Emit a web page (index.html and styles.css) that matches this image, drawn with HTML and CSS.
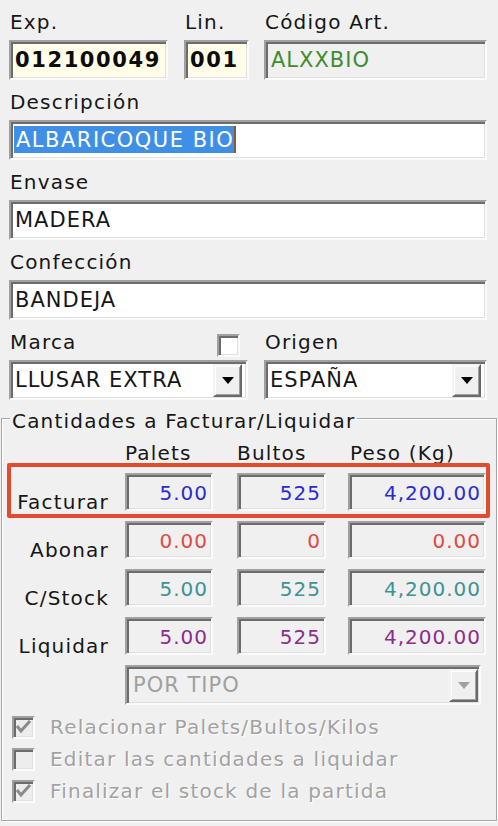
FILE: index.html
```html
<!DOCTYPE html>
<html lang="es">
<head>
<meta charset="utf-8">
<title>Partida</title>
<link rel="stylesheet" href="styles.css">
</head>
<body>
<div class="form">
  <div class="row">
    <div class="field f-exp">
      <div class="lbl">Exp.</div>
      <div class="box yellow bold">012100049</div>
    </div>
    <div class="field f-lin">
      <div class="lbl">Lin.</div>
      <div class="box yellow bold">001</div>
    </div>
    <div class="field f-cod">
      <div class="lbl">Código Art.</div>
      <div class="box grey green">ALXXBIO</div>
    </div>
  </div>

  <div class="lbl">Descripción</div>
  <div class="box white desc"><span class="sel">ALBARICOQUE BIO</span></div>

  <div class="lbl">Envase</div>
  <div class="box white">MADERA</div>

  <div class="lbl">Confección</div>
  <div class="box white">BANDEJA</div>

  <div class="cols2">
    <div class="field">
      <div class="lbl lbl-check"><span>Marca</span><span class="chk white-chk"></span></div>
      <div class="combo">
        <span class="combo-text">LLUSAR EXTRA</span>
        <span class="drop"><svg width="12" height="7" viewBox="0 0 12 7"><path d="M0 0H12L6 7Z" fill="#000"/></svg></span>
      </div>
    </div>
    <div class="field">
      <div class="lbl">Origen</div>
      <div class="combo">
        <span class="combo-text">ESPAÑA</span>
        <span class="drop"><svg width="12" height="7" viewBox="0 0 12 7"><path d="M0 0H12L6 7Z" fill="#000"/></svg></span>
      </div>
    </div>
  </div>
</div>

<fieldset class="group">
  <legend>Cantidades a Facturar/Liquidar</legend>
  <div class="grid">
    <div></div>
    <div class="hdr c1">Palets</div>
    <div class="hdr c2">Bultos</div>
    <div class="hdr c3 hdr-peso">Peso (Kg)</div>

    <div class="rl">Facturar</div>
    <div class="val c1 blue">5.00</div>
    <div class="val c2 blue">525</div>
    <div class="val c3 blue">4,200.00</div>

    <div class="rl">Abonar</div>
    <div class="val c1 red">0.00</div>
    <div class="val c2 red">0</div>
    <div class="val c3 red">0.00</div>

    <div class="rl">C/Stock</div>
    <div class="val c1 teal">5.00</div>
    <div class="val c2 teal">525</div>
    <div class="val c3 teal">4,200.00</div>

    <div class="rl">Liquidar</div>
    <div class="val c1 purple">5.00</div>
    <div class="val c2 purple">525</div>
    <div class="val c3 purple">4,200.00</div>

    <div class="combo combo-off">
      <span class="combo-text">POR TIPO</span>
      <span class="drop"><svg width="12" height="7" viewBox="0 0 12 7"><path d="M0 0H12L6 7Z" fill="#a0a0a0"/></svg></span>
    </div>
  </div>

  <div class="checks">
    <div class="chkrow">
      <span class="chk off-chk"><svg width="19" height="19" viewBox="0 0 19 19"><path d="M3 8L7 13L16 3" fill="none" stroke="#8a8a8a" stroke-width="3"/></svg></span>
      <span class="chk-text">Relacionar Palets/Bultos/Kilos</span>
    </div>
    <div class="chkrow">
      <span class="chk off-chk"></span>
      <span class="chk-text">Editar las cantidades a liquidar</span>
    </div>
    <div class="chkrow">
      <span class="chk off-chk"><svg width="19" height="19" viewBox="0 0 19 19"><path d="M3 8L7 13L16 3" fill="none" stroke="#8a8a8a" stroke-width="3"/></svg></span>
      <span class="chk-text">Finalizar el stock de la partida</span>
    </div>
  </div>
</fieldset>

<div class="highlight"></div>
</body>
</html>
```

FILE: styles.css
```css
* { box-sizing: border-box; }
html, body { margin: 0; padding: 0; }
body {
  background: #f0f0f0;
  font-family: "DejaVu Sans", sans-serif;
  font-size: 20px;
  color: #161616;
  width: 498px;
  height: 826px;
  overflow: hidden;
  position: relative;
}

.form { padding: 0 11px 0 9px; }

.lbl {
  height: 40px;
  padding: 4px 0 0 1px;
  line-height: 36px;
  letter-spacing: 1.2px;
  white-space: nowrap;
}
.lbl-check { display: flex; justify-content: space-between; align-items: flex-start; }

.row { display: flex; }
.f-exp { width: 159px; margin-right: 16px; }
.f-lin { width: 65px; margin-right: 15px; }
.f-cod { width: 223px; }

.cols2 {
  display: grid;
  grid-template-columns: 239px 223px;
  column-gap: 16px;
}

/* sunken 3D edit box */
.box, .combo, .val, .chk {
  border: 2px solid;
  border-color: #a0a0a0 #fbfbfb #fbfbfb #a0a0a0;
  box-shadow: inset 2px 2px 0 #6c6c6c, inset -1px -1px 0 #e0e0e0;
}
.box {
  height: 40px;
  padding: 1px 0 0 4px;
  line-height: 35px;
  font-size: 21px;
  letter-spacing: 1px;
  white-space: nowrap;
  overflow: hidden;
}
.yellow { background: #fffde7; }
.white { background: #ffffff; }
.grey { background: #f0f0f0; }
.bold { font-weight: bold; letter-spacing: 1.6px; color: #0c0c0c; }
.green { color: #3e8c2e; padding-left: 5px; }

.desc { letter-spacing: 1.5px; padding-left: 3px; }
.sel {
  display: inline-block;
  background: #3f8fe6;
  color: #ffffff;
  line-height: 24px;
  padding: 2px 0 1px 2px;
  border-right: 2px solid #8a5a30;
}

/* combo box */
.combo {
  display: flex;
  align-items: center;
  height: 40px;
  background: #ffffff;
  font-size: 21px;
  letter-spacing: 1px;
}
.combo-text { flex: 1; padding-left: 4px; line-height: 35px; white-space: nowrap; }
.drop {
  width: 29px;
  height: 33px;
  margin-right: 4px;
  background: #f0f0f0;
  border: 2px solid;
  border-color: #f4f4f4 #6a6a6a #6a6a6a #f4f4f4;
  box-shadow: inset 1px 1px 0 #ffffff, inset -1px -1px 0 #a0a0a0;
  display: flex;
  align-items: center;
  justify-content: center;
}
.combo-off { background: #f0f0f0; color: #a0a0a0; }
.combo-off .combo-text { padding-left: 6px; }
.combo-off .drop { margin-right: 1px; }

/* checkboxes */
.chk {
  width: 23px;
  height: 23px;
  display: flex;
  align-items: center;
  justify-content: center;
  flex: none;
}
.white-chk { background: #ffffff; margin-top: 10px; margin-right: 8px; }
.off-chk { background: #ededed; }

/* group box */
.group {
  margin: 3px 1px 0;
  padding: 0 0 13px;
  border: 1px solid #a6a6a6;
  box-shadow: inset 1px 1px 0 #ffffff, 1px 1px 0 #ffffff;
  min-width: 0;
}
.group legend {
  margin-left: 8px;
  padding: 6px 2px 0;
  line-height: 24px;
  letter-spacing: 1.2px;
  background: #f0f0f0;
}

.grid {
  margin-top: 10px;
  display: grid;
  grid-template-columns: 107px 88px 97px 144px;
  grid-template-rows: 20px repeat(4, 38px) 40px;
  column-gap: 16px;
  row-gap: 10px;
}
.c1 { width: 88px; }
.c2 { width: 89px; justify-self: end; }
.c3 { width: 138px; justify-self: end; }
.hdr { padding-top: 1px; line-height: 19px; letter-spacing: 1.2px; white-space: nowrap; }
.hdr-peso { padding-left: 2px; }

.rl {
  justify-self: end;
  align-self: end;
  line-height: 18px;
  letter-spacing: 1.2px;
  white-space: nowrap;
}

.val {
  height: 38px;
  background: #f0f0f0;
  text-align: right;
  padding: 1px 3px 0 0;
  line-height: 34px;
  letter-spacing: 1px;
  overflow: hidden;
  white-space: nowrap;
}
.blue { color: #2b2bd4; }
.red { color: #e04a3e; }
.teal { color: #3d9292; }
.purple { color: #8c2c8c; }

.combo-off { grid-column: 2 / 5; width: 356px; }

.checks { margin-top: 6px; }
.chkrow {
  display: flex;
  align-items: center;
  height: 32px;
  padding-left: 10px;
}
.chkrow .chk { margin-right: 15px; }
.chk-text {
  line-height: 32px;
  color: #a2a2a2;
  letter-spacing: 1.2px;
  text-shadow: 1px 1px 0 #ffffff;
  white-space: nowrap;
}

/* annotation overlay */
.highlight {
  position: absolute;
  left: 7px;
  top: 463px;
  width: 483px;
  height: 55px;
  border: 4px solid #e34a30;
  border-radius: 2px;
}
```
